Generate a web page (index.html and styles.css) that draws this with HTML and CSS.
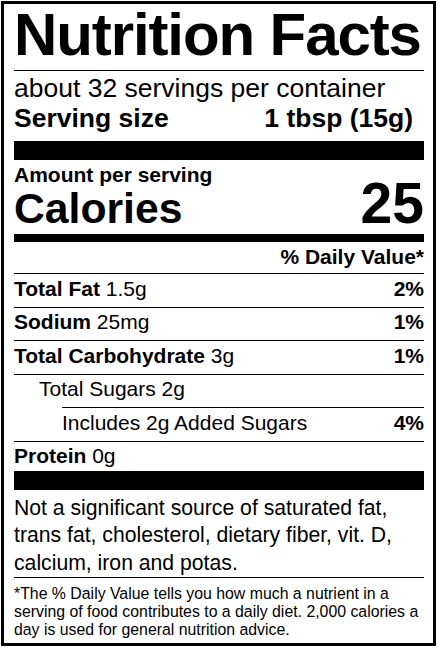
FILE: index.html
```html
<!DOCTYPE html>
<html lang="en">

<head>
    <meta charset="UTF-8">
    <meta name="viewport" content="width=device-width, initial-scale=1.0">
    <title>Nutrition Facts</title>
    <link rel="stylesheet" href="styles.css">
</head>

<body>

    <div class="label">
        <h1 class="title">Nutrition Facts</h1>

        <div class="servings">
            <p>about 32 servings per container</p>
            <p class="serving-size"><span>Serving size</span><span>1 tbsp (15g)</span></p>
        </div>

        <p class="amount">Amount per serving</p>
        <div class="calories">
            <span>Calories</span>
            <span class="calories-value">25</span>
        </div>

        <p class="dv-header">% Daily Value*</p>

        <!-- Nutrient rows -->
        <div class="row"><span><b>Total Fat</b> 1.5g</span><b>2%</b></div>
        <div class="row"><span><b>Sodium</b> 25mg</span><b>1%</b></div>
        <div class="row"><span><b>Total Carbohydrate</b> 3g</span><b>1%</b></div>
        <div class="row sub"><span>Total Sugars 2g</span></div>
        <div class="row sub-2"><span>Includes 2g Added Sugars</span><b>4%</b></div>
        <div class="row last"><span><b>Protein</b> 0g</span></div>

        <div class="bar"></div>

        <p class="note">Not a significant source of saturated fat, trans fat, cholesterol, dietary fiber, vit. D, calcium, iron and potas.</p>

        <p class="footnote">*The % Daily Value tells you how much a nutrient in a serving of food contributes to a daily diet. 2,000 calories a day is used for general nutrition advice.</p>
    </div>

</body>

</html>
```

FILE: styles.css
```css
body {
    margin: 0;
    background: #fff;
    color: #000;
    font-family: "Liberation Sans", Arial, Helvetica, sans-serif;
}

p,
h1 {
    margin: 0;
}

.label {
    margin: 1px;
    width: 435px;
    box-sizing: border-box;
    border: 3px solid #000;
    padding: 0 9px 0 10px;
}

.title {
    font-size: 60px;
    font-weight: bold;
    line-height: 60px;
    letter-spacing: -1.1px;
    white-space: nowrap;
    padding: 1px 0 5px;
    border-bottom: 1px solid #000;
}

.servings {
    font-size: 26.5px;
    line-height: 30px;
    padding: 2px 0 8px;
    border-bottom: 19px solid #000;
}

.serving-size {
    display: flex;
    justify-content: space-between;
    font-weight: bold;
    padding-right: 11px;
}

.amount {
    font-size: 21px;
    font-weight: bold;
    line-height: 24px;
    padding-top: 3px;
}

.calories {
    display: flex;
    justify-content: space-between;
    align-items: baseline;
    height: 47px;
    font-size: 42.7px;
    font-weight: bold;
    line-height: 32px;
    border-bottom: 8px solid #000;
}

.calories-value {
    font-size: 57px;
}

.dv-header {
    font-size: 21px;
    font-weight: bold;
    text-align: right;
    line-height: 27px;
    padding: 1px 0 3px;
}

.row {
    display: flex;
    justify-content: space-between;
    font-size: 21px;
    line-height: 28px;
    border-top: 1px solid #000;
    padding: 0.5px 0 4.1px;
}

.row.sub {
    padding-left: 25px;
}

.row.sub-2 {
    margin-left: 48px;
}

.row.last {
    padding-bottom: 0.5px;
}

.bar {
    height: 19px;
    background: #000;
}

.note {
    font-size: 21.2px;
    line-height: 27.5px;
    padding: 4px 0 0.5px;
    border-bottom: 1px solid #000;
}

.footnote {
    font-size: 15.85px;
    line-height: 18px;
    padding: 6.6px 0 4.4px;
}
```
